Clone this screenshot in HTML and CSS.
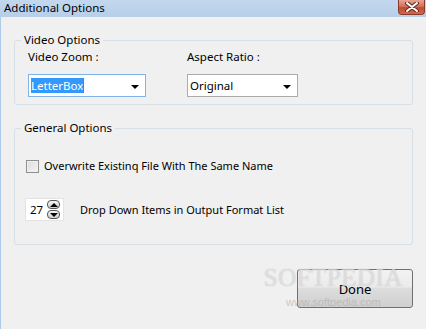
FILE: index.html
```html
<!DOCTYPE html>
<html lang="en">
  <head>
    <meta charset="UTF-8" />
    <title>Additional Options</title>
    <link rel="stylesheet" href="styles.css">
  </head>
  <body>
    <div class="window">
      <div class="titlebar">
        <span class="title">Additional Options</span>
        <span class="close">
          <svg width="14" height="10" viewBox="0 0 14 10">
            <path d="M2 1 L12 9 M12 1 L2 9" stroke="#6b2a20" stroke-width="4" stroke-linecap="round"/>
            <path d="M2 1 L12 9 M12 1 L2 9" stroke="#fff" stroke-width="2" stroke-linecap="round"/>
          </svg>
        </span>
      </div>

      <div class="client">
        <fieldset class="group">
          <legend>Video Options</legend>
          <div class="group-body video-row">
            <div class="field zoom">
              <div class="label">Video Zoom :</div>
              <div class="combo focused">
                <span class="value"><span class="selected">LetterBox</span><span class="caret"></span></span>
                <span class="arrow"></span>
              </div>
            </div>
            <div class="field aspect">
              <div class="label">Aspect Ratio :</div>
              <div class="combo">
                <span class="value">Original</span>
                <span class="arrow"></span>
              </div>
            </div>
          </div>
        </fieldset>

        <fieldset class="group general">
          <legend>General Options</legend>
          <div class="group-body">
            <label class="row check-row">
              <span class="checkbox"></span>
              <span>Overwrite Existinq File With The Same Name</span>
            </label>
            <div class="row spin-row">
              <div class="spin">
                <span class="spin-value">27</span>
                <span class="spin-buttons">
                  <span class="spin-btn up"></span>
                  <span class="spin-btn down"></span>
                </span>
              </div>
              <span>Drop Down Items in Output Format List</span>
            </div>
          </div>
        </fieldset>

        <div class="actions">
          <button class="done">Done</button>
          <div class="watermark">
            <div class="wm-big">SOFTPEDIA</div>
            <div class="wm-small">www.softpedia.com</div>
          </div>
        </div>
      </div>
    </div>
  </body>
</html>
```

FILE: styles.css
```css
html,
body {
  margin: 0;
  padding: 0;
  background-color: #f0f0f0;
  font-family: 'Noto Sans', 'DejaVu Sans', sans-serif;
  font-size: 11px;
  color: #000;
}

.window {
  width: 426px;
  height: 329px;
  display: flex;
  flex-direction: column;
  overflow: hidden;
}

/* title bar */
.titlebar {
  height: 17px;
  display: flex;
  align-items: flex-start;
  justify-content: space-between;
  background: linear-gradient(#c3d8ee, #b6cee8);
}

.title {
  padding-left: 4px;
  font-size: 11.5px;
  line-height: 16px;
}

.close {
  width: 27px;
  height: 15px;
  margin-right: 1px;
  border: 1px solid #8a3a2c;
  border-top: 0;
  border-radius: 0 0 4px 4px;
  box-sizing: border-box;
  background: linear-gradient(#e7a394, #d2725c 45%, #c04a32 55%, #cf6a4e);
  display: flex;
  align-items: center;
  justify-content: center;
}

.close svg {
  display: block;
}

/* client area */
.client {
  flex: 1;
  border-left: 1px solid #aecbee;
  display: flex;
  flex-direction: column;
}

.group {
  margin: 16px 13px 0 13px;
  padding: 0;
  border: 1px solid #d5dfe5;
  border-radius: 3px;
  min-width: 0;
}

.group legend {
  margin-left: 6px;
  padding: 0 3px;
  line-height: 14px;
  font-size: 11.5px;
}

.group-body {
  padding: 3px 13px 7px 13px;
}

.video-row {
  display: flex;
  gap: 41px;
}

.label {
  line-height: 14px;
  margin-bottom: 10px;
  font-size: 11.5px;
}

.zoom .combo {
  width: 118px;
}

.aspect .combo {
  width: 111px;
}

.combo {
  height: 23px;
  box-sizing: border-box;
  border: 1px solid #ababab;
  background: #fff;
  display: flex;
  align-items: center;
  justify-content: space-between;
  padding: 0 6px 0 2px;
  font-size: 11.5px;
}

.combo.focused {
  border-color: #7eb4ea;
}

.value {
  display: flex;
  align-items: center;
  line-height: 15px;
}

.selected {
  background: #3399ff;
  color: #fff;
}

.caret {
  width: 1px;
  height: 15px;
  background: #c8641e;
}

.arrow {
  width: 0;
  height: 0;
  border-left: 4px solid transparent;
  border-right: 4px solid transparent;
  border-top: 4px solid #000;
  margin-top: 2px;
}

/* general options */
.general .group-body {
  padding-top: 24px;
  padding-bottom: 23px;
}

.row {
  display: flex;
  align-items: center;
}

.check-row {
  gap: 5px;
  line-height: 14px;
  margin-left: -2px;
}

.checkbox {
  width: 13px;
  height: 13px;
  box-sizing: border-box;
  border: 1px solid #8e8f8f;
  background: linear-gradient(135deg, #dcdcdc, #f4f4f4);
  box-shadow: inset 0 0 0 1px #f0f0f0;
}

.spin-row {
  margin-top: 25px;
  margin-left: -3px;
  gap: 16px;
}

.spin {
  width: 39px;
  height: 23px;
  box-sizing: border-box;
  border: 1px solid #e3e3e3;
  background: #fff;
  display: flex;
  align-items: center;
  justify-content: space-between;
  padding: 0 3px 0 4px;
  font-size: 11.5px;
}

.spin-value {
  line-height: 14px;
}

.spin-buttons {
  display: flex;
  flex-direction: column;
  gap: 1px;
}

.spin-btn {
  width: 13px;
  height: 9px;
  box-sizing: border-box;
  border: 1px solid #555;
  border-radius: 4px;
  background: linear-gradient(#f5f5f5, #cfcfcf);
  display: flex;
  align-items: center;
  justify-content: center;
}

.spin-btn::after {
  content: '';
  width: 0;
  height: 0;
  border-left: 4px solid transparent;
  border-right: 4px solid transparent;
}

.spin-btn.up::after {
  border-bottom: 4px solid #000;
}

.spin-btn.down::after {
  border-top: 4px solid #000;
}

/* button area */
.actions {
  position: relative;
  display: flex;
  justify-content: flex-end;
  margin: 24px 13px 0 0;
}

.done {
  width: 116px;
  height: 39px;
  border: 1px solid #707070;
  border-radius: 3px;
  background: linear-gradient(#f2f2f2 0%, #ebebeb 45%, #dddddd 50%, #cfcfcf 100%);
  font-family: 'Noto Sans', 'DejaVu Sans', sans-serif;
  font-size: 13px;
  color: #000;
  padding: 0;
}

.watermark {
  position: absolute;
  right: 10px;
  top: -3px;
  pointer-events: none;
  text-align: center;
}

.wm-big {
  font-family: 'Liberation Serif', serif;
  font-size: 25px;
  letter-spacing: 0.5px;
  color: rgba(255, 255, 255, 0.55);
  text-shadow: 0 0 1px rgba(120, 120, 120, 0.5);
  line-height: 24px;
}

.wm-small {
  font-family: 'Liberation Sans', sans-serif;
  font-size: 11px;
  color: rgba(170, 170, 170, 0.6);
  line-height: 12px;
  margin-top: 6px;
}
```
